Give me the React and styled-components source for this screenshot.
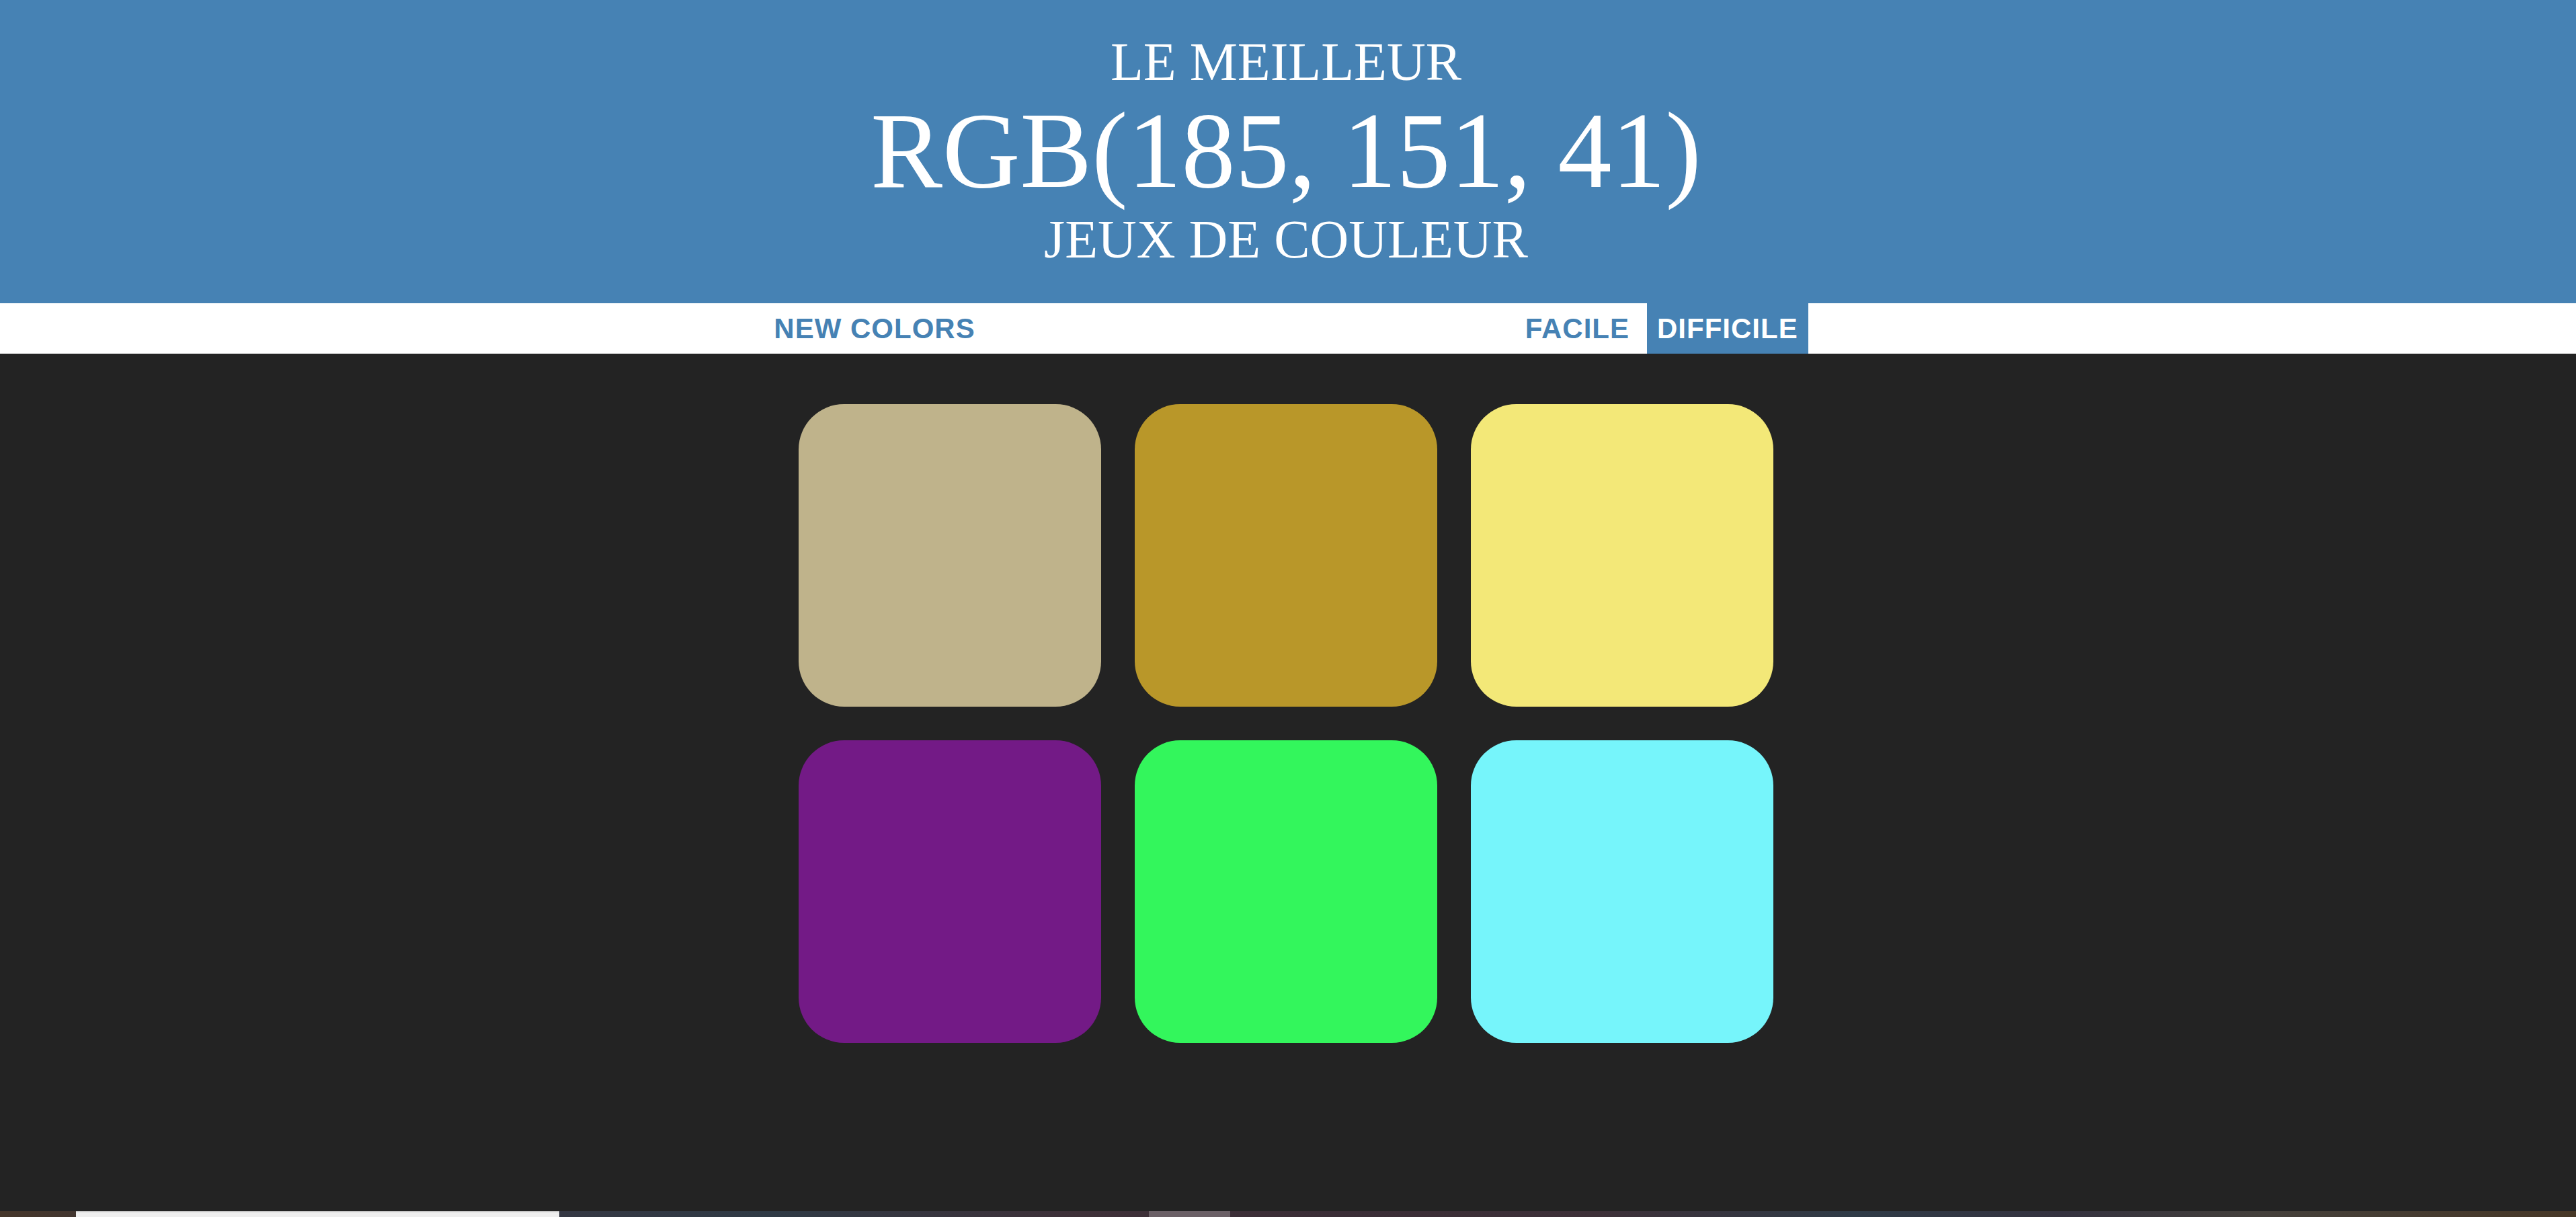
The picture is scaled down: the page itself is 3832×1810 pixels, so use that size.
import React from "react";
import styled, { createGlobalStyle } from "styled-components";

const GlobalStyle = createGlobalStyle`
  html, body {
    margin: 0;
    padding: 0;
    height: 100%;
    background: #232323;
  }
  #root {
    min-height: 100%;
  }
`;

const Page = styled.div`
  min-height: 100vh;
  display: flex;
  flex-direction: column;
  background: #232323;
  font-family: "Liberation Sans", Arial, sans-serif;
`;

const Header = styled.h1`
  margin: 0;
  padding: 48px 6px 51px 0;
  background: #4682b4;
  color: #ffffff;
  text-align: center;
  text-transform: uppercase;
  font-family: "Liberation Serif", "Times New Roman", serif;
  font-weight: normal;
  font-size: 80px;
  line-height: 1.1;
`;

const HeadLine = styled.span`
  display: block;
`;

const ColorDisplay = styled.span`
  display: block;
  font-size: 160px;
`;

const Stripe = styled.nav`
  display: flex;
  justify-content: center;
  align-items: stretch;
  height: 75px;
  padding-right: 6px;
  background: #ffffff;
`;

const NavButton = styled.button`
  border: none;
  margin: 0;
  padding: 0 15px;
  background: ${(p) => (p.$selected ? "#4682b4" : "#ffffff")};
  color: ${(p) => (p.$selected ? "#ffffff" : "#4682b4")};
  font-family: "Liberation Sans", Arial, sans-serif;
  font-weight: 700;
  font-size: 42px;
  letter-spacing: 1px;
  text-transform: uppercase;
  cursor: pointer;
  outline: none;
`;

const Message = styled.span`
  display: inline-block;
  width: 788px;
`;

const ModeGroup = styled.div`
  display: flex;
  gap: 11px;
`;

const Board = styled.main`
  flex: 1;
  display: grid;
  grid-template-columns: repeat(3, 450px);
  grid-auto-rows: 450px;
  gap: 50px;
  justify-content: center;
  align-content: start;
  padding: 75px 6px 0 0;
`;

const Square = styled.div`
  background: ${(p) => p.$color};
  border-radius: 15%;
`;

const Dock = styled.div`
  height: 9px;
  display: flex;
  background: linear-gradient(
    90deg,
    #45362a 0%,
    #3a3440 12%,
    #2f3a45 30%,
    #3e3038 42%,
    #3a2d36 52%,
    #3d3038 62%,
    #2f3b47 72%,
    #34323f 80%,
    #44403b 88%,
    #473726 100%
  );
`;

const DockSpacer = styled.div`
  width: ${(p) => p.$w}px;
  flex-shrink: 0;
`;

const DockWindow = styled.div`
  width: ${(p) => p.$w}px;
  flex-shrink: 0;
  background: ${(p) => p.$bg};
  border-top: ${(p) => (p.$edge ? `2px solid ${p.$edge}` : "none")};
  box-sizing: border-box;
`;

const squares = [
  "rgb(191, 179, 139)",
  "rgb(185, 151, 41)",
  "rgb(243, 232, 120)",
  "rgb(115, 26, 134)",
  "rgb(51, 246, 92)",
  "rgb(118, 245, 251)",
];

export default function App() {
  return (
    <>
      <GlobalStyle />
      <Page>
        <Header>
          <HeadLine>Le meilleur</HeadLine>
          <ColorDisplay>RGB(185, 151, 41)</ColorDisplay>
          <HeadLine>Jeux de couleur</HeadLine>
        </Header>
        <Stripe>
          <NavButton>New Colors</NavButton>
          <Message />
          <ModeGroup>
            <NavButton>Facile</NavButton>
            <NavButton $selected>Difficile</NavButton>
          </ModeGroup>
        </Stripe>
        <Board>
          {squares.map((c, i) => (
            <Square key={i} $color={c} />
          ))}
        </Board>
        <Dock>
          <DockSpacer $w={113} />
          <DockWindow $w={719} $bg="#efefef" $edge="#c8c8c8" />
          <DockSpacer $w={877} />
          <DockWindow $w={121} $bg="#6b6066" />
        </Dock>
      </Page>
    </>
  );
}
